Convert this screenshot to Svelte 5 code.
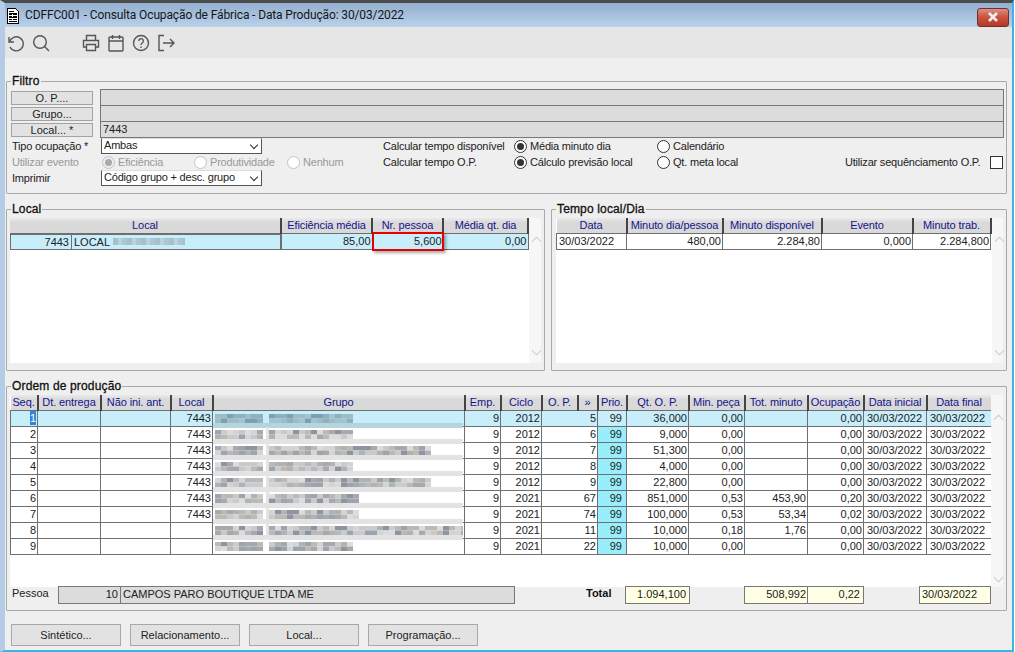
<script>
  const ordemCols = [
    { t: 'Seq.', w: 27 }, { t: 'Dt. entrega', w: 63 }, { t: 'Não ini. ant.', w: 70 }, { t: 'Local', w: 42 },
    { t: 'Grupo', w: 252 }, { t: 'Emp.', w: 36 }, { t: 'Ciclo', w: 41 }, { t: 'O. P.', w: 36 }, { t: '»', w: 20 },
    { t: 'Prio.', w: 29 }, { t: 'Qt. O. P.', w: 62 }, { t: 'Min. peça', w: 56 }, { t: 'Tot. minuto', w: 63 },
    { t: 'Ocupação', w: 56 }, { t: 'Data inicial', w: 63 }, { t: 'Data final', w: 65 }
  ];
  const d = '30/03/2022';
  const rows = [
    ['1', '7443', '2012', '5', '36,000', '0,00', '', '0,00'],
    ['2', '7443', '2012', '6', '9,000', '0,00', '', '0,00'],
    ['3', '7443', '2012', '7', '51,300', '0,00', '', '0,00'],
    ['4', '7443', '2012', '8', '4,000', '0,00', '', '0,00'],
    ['5', '7443', '2012', '9', '22,800', '0,00', '', '0,00'],
    ['6', '7443', '2021', '67', '851,000', '0,53', '453,90', '0,20'],
    ['7', '7443', '2021', '74', '100,000', '0,53', '53,34', '0,02'],
    ['8', '', '2021', '11', '10,000', '0,18', '1,76', '0,00'],
    ['9', '', '2021', '22', '10,000', '0,00', '', '0,00']
  ];
  const blurEnds = [140, 140, 215, 140, 215, 145, 145, 250, 140];
  const palette = ['#b9b9b9', '#a9a9ad', '#c9c9c9', '#d4d4d4', '#9ea4ae', '#bfb9b3', '#c6ccd0', '#aeb3b3', '#dcdcdc', '#8f95a0'];
  let seed = 7;
  function rnd() { seed = (seed * 1103 + 12345) % 65536; return seed / 65536; }
  const blocks = [];
  const bands = [];
  blurEnds.forEach((end, r) => {
    const y = r * 16;
    if (r < 8) bands.push({ y: y + 12, h: 5, fill: r === 0 ? '#b4d4de' : '#e3e3e3' });
    for (let x = 2; x < end; x += 6) {
      if (x >= 50 && x < 56) continue;
      for (let j = 0; j < 2; j++) {
        const base = palette[Math.floor(rnd() * palette.length)];
        blocks.push({
          x, y: y + 3 + j * 4.5, w: 6, h: 4.5,
          fill: r === 0 ? ['#8fb0bf', '#a3c3cf', '#7f9eb4', '#9dbcc4'][Math.floor(rnd() * 4)] : base
        });
      }
    }
  });
  const localCols = [{ t: 'Local', w: 271 }, { t: 'Eficiência média', w: 91 }, { t: 'Nr. pessoa', w: 71 }, { t: 'Média qt. dia', w: 85 }];
  const tempoCols = [{ t: 'Data', w: 70 }, { t: 'Minuto dia/pessoa', w: 96 }, { t: 'Minuto disponível', w: 99 }, { t: 'Evento', w: 91 }, { t: 'Minuto trab.', w: 78 }];
</script>

<div class="win">
  <header class="title">
    <svg class="docicon" viewBox="0 0 12 16" width="12" height="16" shape-rendering="crispEdges">
      <path d="M.5 .5h8l3 3v12h-11z" fill="#fff" stroke="#000"/>
      <path d="M2 3h5M2 5h8M2 6h3M6 6h4M2 8h3M6 8h4M2 9h8M2 11h3M6 11h4M2 13h8" stroke="#000" fill="none"/>
    </svg>
    <span class="title-text">CDFFC001 - Consulta Ocupação de Fábrica - Data Produção: 30/03/2022</span>
    <button class="close" aria-label="Fechar">
      <svg viewBox="0 0 12 10" width="12" height="10"><path d="M2 1l8 8M10 1l-8 8" stroke="#f3eeee" stroke-width="2.6" fill="none"/></svg>
    </button>
  </header>

  <nav class="toolbar">
    <svg class="tool" viewBox="0 0 18 18"><path d="M2 3v5h5"/><path d="M2.5 8a7 7 0 1 1 .5 5"/></svg>
    <svg class="tool" viewBox="0 0 18 18"><circle cx="8" cy="8" r="6.3"/><path d="M12.6 12.6L17 17"/></svg>
    <span class="tool-gap"></span>
    <svg class="tool" viewBox="0 0 18 18"><path d="M4.5 6V1.5h9V6"/><path d="M4.5 13H1.5V6.5h15V13h-3"/><path d="M4.5 10.5h9v6h-9z"/></svg>
    <svg class="tool" viewBox="0 0 18 18"><rect x="2" y="3" width="14" height="14" rx="1"/><path d="M2 7h14M5.5 1v4M12.500 1v4"/></svg>
    <svg class="tool" viewBox="0 0 18 18"><circle cx="9" cy="9" r="7.5"/><path d="M6.800 7a2.300 2.300 0 1 1 3.400 2c-.8.5-1.200 1-1.200 2"/><path d="M9 12.500v1.500"/></svg>
    <svg class="tool" viewBox="0 0 18 18"><path d="M7 1.500H2v15h5"/><path d="M6 9h11M13 5l4 4-4 4"/></svg>
  </nav>

  <main class="body">
    <section class="group filtro">
      <span class="legend">Filtro</span>
      <div class="lookups">
        <button class="mini">O. P....</button><div class="ro"></div>
        <button class="mini">Grupo...</button><div class="ro"></div>
        <button class="mini">Local... *</button><div class="ro">7443</div>
      </div>
      <div class="opts">
        <span>Tipo ocupação *</span>
        <div class="select">Ambas<i class="chev"></i></div>
        <span>Calcular tempo disponível</span>
        <label class="radio"><i class="dot on"></i>Média minuto dia</label>
        <label class="radio"><i class="dot"></i>Calendário</label>
        <span></span>

        <span class="dim">Utilizar evento</span>
        <div class="radios dim">
          <label class="radio w92"><i class="dot on off"></i>Eficiência</label>
          <label class="radio w93"><i class="dot off"></i>Produtividade</label>
          <label class="radio"><i class="dot off"></i>Nenhum</label>
        </div>
        <span>Calcular tempo O.P.</span>
        <label class="radio"><i class="dot on"></i>Cálculo previsão local</label>
        <label class="radio"><i class="dot"></i>Qt. meta local</label>
        <div class="seq"><span>Utilizar sequênciamento O.P.</span><i class="check"></i></div>

        <span>Imprimir</span>
        <div class="select">Código grupo + desc. grupo<i class="chev"></i></div>
      </div>
    </section>

    <div class="pair">
      <section class="group local">
        <span class="legend">Local</span>
        <div class="grid-panel">
          <table style="width:518px">
            <colgroup>{#each localCols as c}<col style="width:{c.w}px" />{/each}</colgroup>
            <thead><tr>{#each localCols as c}<th>{c.t}</th>{/each}</tr></thead>
            <tbody>
              <tr class="sel">
                <td class="split">
                  <span class="code">7443</span><span class="desc">LOCAL <span class="smudge"></span></span>
                </td>
                <td class="r">85,00</td>
                <td class="r marked">5,600<span class="redbox"></span></td>
                <td class="r">0,00</td>
              </tr>
            </tbody>
          </table>
          <div class="gutter"><i class="up"></i><i class="down"></i></div>
        </div>
      </section>

      <section class="group tempo">
        <span class="legend">Tempo local/Dia</span>
        <div class="grid-panel">
          <table style="width:434px">
            <colgroup>{#each tempoCols as c}<col style="width:{c.w}px" />{/each}</colgroup>
            <thead><tr>{#each tempoCols as c}<th>{c.t}</th>{/each}</tr></thead>
            <tbody>
              <tr>
                <td>{d}</td><td class="r">480,00</td><td class="r">2.284,80</td><td class="r">0,000</td><td class="r">2.284,800</td>
              </tr>
            </tbody>
          </table>
          <div class="gutter"><i class="up"></i><i class="down"></i></div>
        </div>
      </section>
    </div>

    <section class="group ordem">
      <span class="legend">Ordem de produção</span>
      <div class="grid-panel op-panel">
        <div class="op-table">
          <table style="width:981px">
            <colgroup>{#each ordemCols as c}<col style="width:{c.w}px" />{/each}</colgroup>
            <thead><tr>{#each ordemCols as c}<th>{c.t}</th>{/each}</tr></thead>
            <tbody>
              {#each rows as row, i}
                <tr class:sel={i === 0}>
                  <td class="r">{#if i === 0}<span class="cur">{row[0]}</span>{:else}{row[0]}{/if}</td>
                  <td></td><td></td>
                  <td class="r">{row[1]}</td>
                  <td></td>
                  <td class="r">9</td>
                  <td class="r">{row[2]}</td>
                  <td class="r" colspan="2">{row[3]}</td>
                  <td class="r prio">99</td>
                  <td class="r">{row[4]}</td>
                  <td class="r">{row[5]}</td>
                  <td class="r">{row[6]}</td>
                  <td class="r">{row[7]}</td>
                  <td class="dt">{d}</td>
                  <td class="dt">{d}</td>
                </tr>
              {/each}
            </tbody>
          </table>
          <svg class="mosaic" width="250" height="144" viewBox="0 0 250 144" aria-hidden="true">
            {#each bands as b}<rect x="0" y={b.y} width="250" height={b.h} fill={b.fill} />{/each}
            {#each blocks as b}<rect x={b.x} y={b.y} width={b.w} height={b.h} fill={b.fill} />{/each}
            <rect x="53" y="16" width="3" height="112" fill="#e3e3e3" />
          </svg>
        </div>
        <div class="gutter"><i class="up op"></i><i class="down op"></i></div>
      </div>
      <div class="foot">
        <span class="f-label">Pessoa</span>
        <div class="f-box grey">
          <span class="f-code">10</span><span class="f-name">CAMPOS PARO BOUTIQUE LTDA ME</span>
        </div>
        <b class="f-total">Total</b>
        <div class="f-box yel t1">1.094,100</div>
        <div class="f-box yel t2">508,992</div>
        <div class="f-box yel t3">0,22</div>
        <div class="f-box yel t4">{d}</div>
      </div>
    </section>

    <div class="actions">
      <button>Sintético...</button>
      <button>Relacionamento...</button>
      <button>Local...</button>
      <button>Programação...</button>
    </div>
  </main>
</div>

<style>
  :global(body) { margin: 0; background: #fff; }
  .win {
    width: 1014px; height: 652px; box-sizing: border-box;
    display: flex; flex-direction: column;
    border-top: 3px solid #4c4c4c;
    border-left: 5px solid #b4cce6;
    border-right: 2px solid #38b6e0;
    border-bottom: 2px solid #38b6e0;
    position: relative;
    background: #efefef;
    font: 11px "Liberation Sans", Arial, sans-serif;
    color: #222;
    overflow: hidden;
  }
  .title {
    height: 24px; flex: none;
    display: flex; align-items: center;
    padding-left: 2px;
    background: linear-gradient(#93afce, #b9d2ec);
  }
  .docicon { flex: none; margin-top: 1px; }
  .title-text {
    margin-left: 6px;
    font: 12px Roboto, "Noto Sans", sans-serif;
    letter-spacing: -.13px;
    color: #151515;
  }
  .close {
    margin-left: auto; margin-right: 3px; margin-top: 4px;
    width: 32px; height: 19px; padding: 0;
    border: 1px solid #6e3030; border-radius: 3px;
    background: linear-gradient(#dc9084, #c9503c 50%, #b23a26);
    display: flex; align-items: center; justify-content: center;
  }
  .toolbar {
    height: 31px; flex: none;
    display: flex; align-items: center;
    padding-left: 2px;
    background: #e6e6e6;
  }
  .tool { width: 18px; height: 18px; margin-right: 7px; fill: none; stroke: #555; stroke-width: 1.4; }
  .tool-gap { width: 25px; }
  .body { flex: 1; display: flex; flex-direction: column; padding: 23px 5px 0 1px; min-height: 0; }
  .group {
    position: relative; box-sizing: border-box;
    border: 1px solid #a9a9a9;
    border-radius: 1px;
  }
  .legend {
    position: absolute; left: 4px; top: -7px; padding: 0 1px;
    background: #efefef; line-height: 13px;
    font-size: 12px; font-weight: 400; color: #111;
    letter-spacing: .15px;
    -webkit-text-stroke: .3px #111;
  }
  .filtro { height: 113px; padding: 7px 2px 0 4px; }
  .lookups {
    display: grid; grid-template-columns: 82px 1fr; column-gap: 7px;
    grid-auto-rows: 16px; margin-bottom: 1px;
  }
  .mini {
    align-self: end; height: 14px; padding: 0;
    border: 1px solid #a3a3a3; background: #e2e2e2;
    font: inherit; color: #222; line-height: 12px; margin-bottom: 0;
  }
  .ro {
    height: 17px; box-sizing: border-box;
    border: 1px solid #777; background: #dcdcdc;
    padding-left: 2px; line-height: 15px;
  }
  .opts {
    display: grid;
    grid-template-columns: 89px 282px 131px 143px 188px 1fr;
    grid-auto-rows: 16px;
    align-items: center;
    padding-left: 1px;
    letter-spacing: -.2px;
  }
  .dim { color: #999; }
  .select {
    position: relative; width: 161px; height: 16px; box-sizing: border-box;
    border: 1px solid #555; border-top-color: #ddd; background: #fff;
    padding-left: 2px; line-height: 13px;
  }
  .chev {
    position: absolute; right: 4px; top: 3px; width: 5px; height: 5px;
    border-right: 1px solid #333; border-bottom: 1px solid #333;
    transform: rotate(45deg);
  }
  .radios { display: flex; padding-left: 1px; }
  .w92 { width: 92px; }
  .w93 { width: 93px; }
  .radio { display: flex; align-items: center; gap: 3px; }
  .dot {
    flex: none; width: 13px; height: 13px; box-sizing: border-box;
    border: 1px solid #333; border-radius: 50%; background: #fff;
    display: flex; align-items: center; justify-content: center;
  }
  .dot.on::after { content: ''; width: 7px; height: 7px; border-radius: 50%; background: #333; }
  .dot.off { border-color: #c4c4c4; }
  .dot.on.off { background: #eee; }
  .dot.on.off::after { background: #aaa; }
  .seq { display: flex; align-items: center; justify-content: space-between; padding-right: 1px; }
  .check { width: 13px; height: 13px; box-sizing: border-box; border: 1px solid #333; background: #fff; }
  .pair { display: flex; gap: 6px; margin-top: 15px; }
  .local { width: 539px; height: 162px; padding: 8px 3px 7px 3px; }
  .tempo { flex: 1; height: 162px; padding: 8px 3px 7px 4px; }
  .grid-panel { position: relative; display: flex; background: #fff; height: 145px; }
  .gutter { position: relative; flex: 1; background: #f7f7f7; }
  .up, .down {
    position: absolute; left: 4px; width: 6px; height: 6px;
    border-left: 1.500px solid #ccc; border-top: 1.500px solid #ccc;
    transform: rotate(45deg);
  }
  .up { top: 20px; }
  .down { bottom: 9px; transform: rotate(225deg); }
  .up.op { top: 21px; }
  .down.op { bottom: 6px; }
  table {
    border-collapse: collapse; table-layout: fixed; align-self: flex-start;
    flex: none;
  }
  th {
    height: 15px; padding: 0; box-sizing: border-box; font-weight: 400;
    color: #14148c; text-align: center; white-space: nowrap; overflow: hidden;
    background: linear-gradient(#eaeaea, #d9d9d9 30%);
    border-right: 2px solid #444;
    line-height: 13px;
    letter-spacing: -.1px;
  }
  td {
    height: 16px; padding: 0 1px 0 2px; box-sizing: border-box;
    border: 1px solid #6f6f6f; white-space: nowrap; line-height: 14px; color: #222;
    background: #fff;
  }
  thead tr { border-bottom: 1px solid #6f6f6f; }
  .r { text-align: right; }
  .sel td { background: #c8edfb; }
  .prio { background: #98eefb; padding-right: 4px; }
  .sel .prio { background: #c8edfb; }
  .dt { padding-left: 3px; }
  .cur { background: #2f86dc; color: #fff; padding: 1px 0; }
  .split { padding: 0; display: flex; height: 16px; }
  .code { width: 61px; box-sizing: border-box; text-align: right; padding-right: 2px; border-right: 1px solid #6f6f6f; }
  .desc { padding-left: 2px; display: flex; align-items: center; gap: 3px; }
  .smudge {
    width: 72px; height: 7px;
    background: repeating-linear-gradient(90deg, #9fb9c4 0 5px, #b5cfd9 5px 9px, #a8c0cb 9px 14px);
    opacity: .85;
  }
  .marked { position: relative; }
  .redbox {
    position: absolute; left: -1px; right: -1px; top: -2px; bottom: -2px;
    border: 2px solid #e60000;
    box-shadow: 2px 2px 3px rgba(0,0,0,.35);
    pointer-events: none;
  }
  .ordem { height: 225px; margin-top: 15px; padding: 8px 3px 0 3px; }
  .op-panel { height: 192px; }
  .op-table { position: relative; width: 981px; flex: none; }
  .mosaic { position: absolute; left: 203px; top: 16px; }
  .foot {
    display: flex; height: 18px; margin-top: -1px; align-items: stretch;
    position: relative;
  }
  .f-label { width: 48px; padding-left: 2px; line-height: 14px; box-sizing: border-box; }
  .f-box { box-sizing: border-box; border: 1px solid #777; line-height: 15px; }
  .grey { width: 457px; display: flex; background: #dcdcdc; }
  .f-code { width: 62px; box-sizing: border-box; text-align: right; padding-right: 2px; border-right: 1px solid #777; }
  .f-name { padding-left: 2px; }
  .f-total { margin-left: 71px; width: 39px; line-height: 14px; color: #111; }
  .yel { background: #ffffe6; text-align: right; padding-right: 3px; }
  .t1 { width: 65px; }
  .t2 { margin-left: 54px; width: 64px; padding-right: 1px; }
  .t3 { width: 57px; margin-left: -1px; border-left: 1px solid #777; }
  .t4 { margin-left: 55px; width: 72px; text-align: left; padding: 0 0 0 2px; }
  .actions { display: flex; gap: 9px; margin-top: 13px; padding-left: 5px; }
  .actions button {
    width: 110px; height: 22px; padding: 0;
    border: 1px solid #a8a8a8; background: #e2e2e2;
    font: inherit; color: #222;
  }
</style>
